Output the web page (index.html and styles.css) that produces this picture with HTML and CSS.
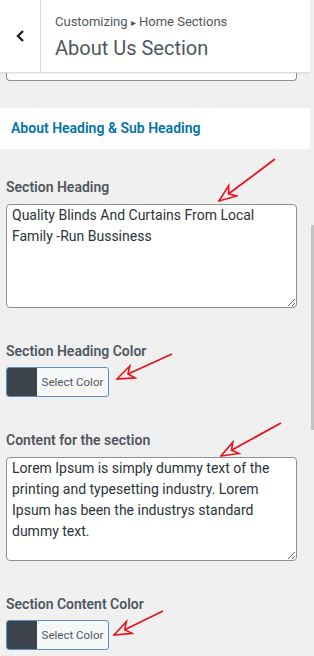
FILE: index.html
```html
<!DOCTYPE html>
<html>
<head>
<meta charset="utf-8">
<link rel="stylesheet" href="styles.css">
</head>
<body>
<div class="page">
  <main class="main">
    <header class="head">
      <button class="back" aria-label="Back">
        <svg width="12" height="14" viewBox="0 0 12 14"><polyline points="8,2 3,7 8,12" fill="none" stroke="#1d2327" stroke-width="2.4" stroke-linejoin="miter"/></svg>
      </button>
      <div class="titles">
        <div class="crumb">Customizing <span class="tri">▸</span> Home Sections</div>
        <div class="title">About Us Section</div>
      </div>
    </header>
    <div class="stub"></div>
    <div class="section-title">About Heading &amp; Sub Heading</div>
    <div class="control">
      <label class="label">Section Heading</label>
      <textarea class="area">Quality Blinds And Curtains From Local Family -Run Bussiness</textarea>
    </div>
    <div class="control">
      <label class="label">Section Heading Color</label>
      <button class="color-btn"><span class="swatch"></span><span class="btn-text">Select Color</span></button>
    </div>
    <div class="control">
      <label class="label">Content for the section</label>
      <textarea class="area">Lorem Ipsum is simply dummy text of the printing and typesetting industry. Lorem Ipsum has been the industrys standard dummy text.</textarea>
    </div>
    <div class="control">
      <label class="label">Section Content Color</label>
      <button class="color-btn"><span class="swatch"></span><span class="btn-text">Select Color</span></button>
    </div>
  </main>
  <div class="rail"><div class="thumb"></div></div>
  <svg class="arrows" width="314" height="656" viewBox="0 0 314 656">
    <defs>
      <marker id="head" viewBox="0 0 20 16" refX="19" refY="8" markerWidth="20" markerHeight="16" markerUnits="userSpaceOnUse" orient="auto">
        <path d="M2,1.5 L19,8 L2,14.5 L7,8 Z" fill="#fbeaea" stroke="#e5141c" stroke-width="1.6" stroke-linejoin="miter"/>
      </marker>
    </defs>
    <g stroke="#e5141c" stroke-width="1.8" fill="none">
      <line x1="275" y1="159" x2="219" y2="201" marker-end="url(#head)"/>
      <line x1="172" y1="354" x2="117" y2="379" marker-end="url(#head)"/>
      <line x1="281" y1="423" x2="221" y2="456" marker-end="url(#head)"/>
      <line x1="163" y1="611" x2="114" y2="635" marker-end="url(#head)"/>
    </g>
  </svg>
</div>
</body>
</html>
```
FILE: styles.css
```css
* { box-sizing: border-box; }
html, body { margin: 0; padding: 0; }
body {
  background: #f0f0f1;
  font-family: Roboto, "Noto Sans", sans-serif;
  color: #50575e;
  width: 314px;
  height: 656px;
  overflow: hidden;
}
.page {
  position: relative;
  display: flex;
  width: 314px;
  height: 656px;
}
.main {
  width: 310px;
  flex: none;
}
.head {
  display: flex;
  height: 73px;
  background: #fff;
  border-bottom: 1px solid #dcdcde;
  box-shadow: 0 1px 2px rgba(0,0,0,0.06);
  position: relative;
  z-index: 1;
}
.back {
  width: 41px;
  flex: none;
  border: 0;
  border-right: 1px solid #dcdcde;
  background: #fff;
  padding: 0 0 0 1px;
  display: flex;
  align-items: center;
  justify-content: center;
}
.titles {
  padding: 13px 0 0 14px;
}
.crumb {
  font-size: 13px;
  line-height: 18px;
  color: #50575e;
}
.tri { font-size: 10px; }
.title {
  font-size: 20px;
  line-height: 26px;
  margin-top: 3px;
  color: #50575e;
}
.stub {
  margin: 0 13px 0 6px;
  height: 8px;
  background: #fff;
  border: 1px solid #8c8f94;
  border-top: 0;
  border-radius: 0 0 4px 4px;
}
.section-title {
  margin-top: 27px;
  height: 41px;
  background: #fff;
  color: #0073aa;
  font-size: 14px;
  font-weight: 600;
  line-height: 41px;
  padding-left: 11px;
}
.control {
  padding: 0 13px 0 6px;
  display: flex;
  flex-direction: column;
  align-items: flex-start;
}
.section-title + .control { margin-top: 28px; }
.control + .control { margin-top: 33px; }
.label {
  font-size: 14px;
  font-weight: 600;
  line-height: 20px;
  color: #50575e;
}
.area {
  margin-top: 7px;
  width: 291px;
  height: 104px;
  border: 1px solid #8c8f94;
  border-radius: 4px;
  background: #fff;
  font-family: Roboto, "Noto Sans", sans-serif;
  font-size: 14px;
  line-height: 21px;
  color: #2c3338;
  padding: 0 5px;
  resize: vertical;
}
.color-btn {
  margin-top: 6px;
  display: flex;
  align-items: stretch;
  height: 30px;
  width: 103px;
  padding: 0;
  border: 1px solid #5b8fc0;
  border-radius: 3px;
  background: #f6f7f7;
  overflow: hidden;
}
.swatch {
  width: 30px;
  background: #3c434a;
}
.btn-text {
  flex: 1;
  font-family: Roboto, "Noto Sans", sans-serif;
  font-size: 11.5px;
  line-height: 28px;
  color: #50575e;
  text-align: center;
}
.rail {
  width: 4px;
  flex: none;
  padding-top: 225px;
}
.thumb {
  width: 3px;
  margin-left: 1px;
  height: 205px;
  background: #c3c4c7;
}
.arrows {
  position: absolute;
  left: 0;
  top: 0;
  pointer-events: none;
}
```
